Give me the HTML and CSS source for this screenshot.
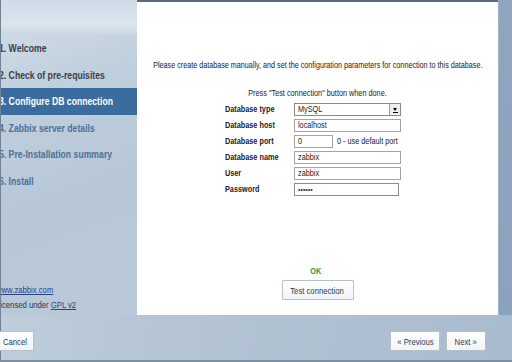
FILE: index.html
```html
<!DOCTYPE html>
<html>
<head>
<meta charset="utf-8">
<link rel="stylesheet" href="styles.css">
</head>
<body>
<div class="page">
  <div class="top">
    <aside class="side">
      <div class="logo-area"></div>
      <ul class="steps">
        <li class="done"><span class="n">1. Welcome</span></li>
        <li class="done"><span class="n">2. Check of pre-requisites</span></li>
        <li class="active"><span class="n">3. Configure DB connection</span></li>
        <li><span class="n">4. Zabbix server details</span></li>
        <li><span class="n">5. Pre-Installation summary</span></li>
        <li><span class="n">6. Install</span></li>
      </ul>
      <div class="links">
        <div><span class="n"><a href="#">www.zabbix.com</a></span></div>
        <div><span class="n">Licensed under <a href="#">GPL v2</a></span></div>
      </div>
    </aside>
    <main class="panel">
      <p class="intro"><span class="nc">Please create database manually, and set the configuration parameters for connection to this database.</span></p>
      <p class="press"><span class="nc">Press "Test connection" button when done.</span></p>
      <table class="form">
        <tr><th><span class="n">Database type</span></th><td><div class="select"><span class="n">MySQL</span><i class="arrow"></i></div></td></tr>
        <tr><th><span class="n">Database host</span></th><td><div class="input wide"><span class="n">localhost</span></div></td></tr>
        <tr><th><span class="n">Database port</span></th><td><div class="port"><div class="input short"><span class="n">0</span></div><span class="hint n">0 - use default port</span></div></td></tr>
        <tr><th><span class="n">Database name</span></th><td><div class="input wide"><span class="n">zabbix</span></div></td></tr>
        <tr><th><span class="n">User</span></th><td><div class="input wide"><span class="n">zabbix</span></div></td></tr>
        <tr><th><span class="n">Password</span></th><td><div class="input pw"><span class="dots">••••••</span></div></td></tr>
      </table>
      <div class="status">
        <div class="ok"><span class="nc">OK</span></div>
        <button class="btn test"><span class="nc">Test connection</span></button>
      </div>
    </main>
    <div class="edge"></div>
  </div>
  <div class="foot">
    <button class="btn cancel"><span class="n">Cancel</span></button>
    <div class="nav">
      <button class="btn prev"><span class="nc">« Previous</span></button>
      <button class="btn next"><span class="nc">Next »</span></button>
    </div>
  </div>
</div>
</body>
</html>
```

FILE: styles.css
```css
* { box-sizing: border-box; }
html, body { margin: 0; padding: 0; }
body {
  width: 512px;
  height: 362px;
  overflow: hidden;
  font-family: "Liberation Sans", Arial, sans-serif;
  background: #b5c5d6;
}
.n, .nc {
  display: inline-block;
  white-space: nowrap;
  transform: scaleX(0.81);
  transform-origin: left center;
}
.nc { transform-origin: center center; }
.page {
  width: 512px;
  height: 362px;
  display: flex;
  flex-direction: column;
  background: linear-gradient(100deg, #c2d0de 0%, #b4c4d5 40%, #aebfd1 70%, #a9bbce 100%);
  border-left: 1px solid #6f8296;
  border-bottom: 2px solid #7d8fa3;
}
.top {
  display: flex;
  height: 315px;
}
.side {
  width: 136px;
  display: flex;
  flex-direction: column;
  overflow: hidden;
  background: linear-gradient(160deg, #d3dee9 0%, #c0cfdd 30%, #b7c7d8 60%, #b9c9d9 100%);
}
.logo-area {
  height: 35px;
  background: linear-gradient(180deg, #cfdbe7 0%, #dbe5ee 70%, #c9d6e3 100%);
}
.steps {
  list-style: none;
  margin: 0;
  padding: 0;
}
.steps li {
  height: 26.5px;
  line-height: 26.5px;
  font-size: 10.7px;
  font-weight: bold;
  color: #4d7098;
  white-space: nowrap;
  padding-left: 0;
}
.steps li .n { margin-left: -2px; }
.steps li.done { color: #3b4049; }
.steps li.active {
  color: #ffffff;
  background: #3b6c9f;
}
.links {
  margin-top: auto;
  padding-bottom: 3px;
  font-size: 9.5px;
  line-height: 15px;
  color: #2e3540;
}
.links .n { margin-left: -5px; }
.links a { color: #2b3f8a; text-decoration: underline; }
.panel {
  width: 361px;
  background: #ffffff;
  border-top: 2px solid #5c6b7c;
  display: flex;
  flex-direction: column;
  align-items: center;
}
.edge {
  flex: 1;
  background: linear-gradient(180deg, #8ea6be 0%, #8aa2bb 100%);
  border-left: 1px solid #9fb2c6;
}
.intro {
  margin: 57px 0 0;
  font-size: 9px;
  line-height: 12px;
  color: #222;
  white-space: nowrap;
}
.intro .nc { transform: scaleX(0.80); }
.press {
  margin: 16px 0 0;
  font-size: 9px;
  line-height: 12px;
  color: #222;
}
.form {
  border-collapse: collapse;
  margin: 2px 0 0 88px;
  align-self: flex-start;
}
.form th {
  text-align: left;
  font-size: 9px;
  font-weight: bold;
  color: #222;
  width: 69px;
  padding: 0;
  height: 16px;
}
.form td {
  padding: 1px 0;
  height: 16px;
}
.input, .select {
  height: 13px;
  border: 1px solid #a4a4a4;
  font-size: 9px;
  line-height: 11px;
  padding: 0 3px;
  color: #222;
  background: #fff;
}
.wide { width: 107px; }
.pw { width: 105px; border-color: #8c8c8c; }
.dots { font-size: 7px; letter-spacing: 0; line-height: 11px; vertical-align: top; color: #333; }
.short { width: 39px; }
.port { display: flex; align-items: center; gap: 4px; }
.hint { font-size: 9px; color: #222; }
.select {
  width: 107px;
  display: flex;
  justify-content: space-between;
  align-items: center;
  padding-right: 0;
  border-color: #8a8a8a;
}
.arrow {
  width: 11px;
  height: 11px;
  border-left: 1px solid #a0a0a0;
  background: #eeeeee;
  position: relative;
}
.arrow::after {
  content: "";
  position: absolute;
  left: 3px;
  top: 4px;
  border-left: 2.5px solid transparent;
  border-right: 2.5px solid transparent;
  border-top: 3px solid #000;
}
.arrow::before {
  content: "";
  position: absolute;
  left: 3px;
  top: 8px;
  width: 5px;
  height: 1px;
  background: #000;
}
.status {
  margin-top: auto;
  margin-bottom: 15px;
  display: flex;
  flex-direction: column;
  align-items: center;
}
.ok {
  color: #2e9a2e;
  font-size: 9px;
  font-weight: bold;
  line-height: 11px;
  margin-bottom: 3px;
  margin-left: -3px;
}
.btn {
  font-family: inherit;
  font-size: 9.5px;
  color: #2d3a4d;
  background: linear-gradient(180deg, #ffffff 0%, #f1f4f7 100%);
  border: 1px solid #b6c1cd;
  border-radius: 1px;
  height: 20px;
  padding: 0;
  white-space: nowrap;
}
.test { width: 72px; }
.foot {
  flex: 1;
  display: flex;
  align-items: flex-start;
  justify-content: space-between;
  padding-top: 16px;
}
.cancel {
  width: 35px;
  margin-left: -2px;
  text-align: left;
  padding-left: 3px;
}
.nav { display: flex; gap: 6px; margin-right: 26px; }
.prev { width: 50px; }
.next { width: 40px; }
```
